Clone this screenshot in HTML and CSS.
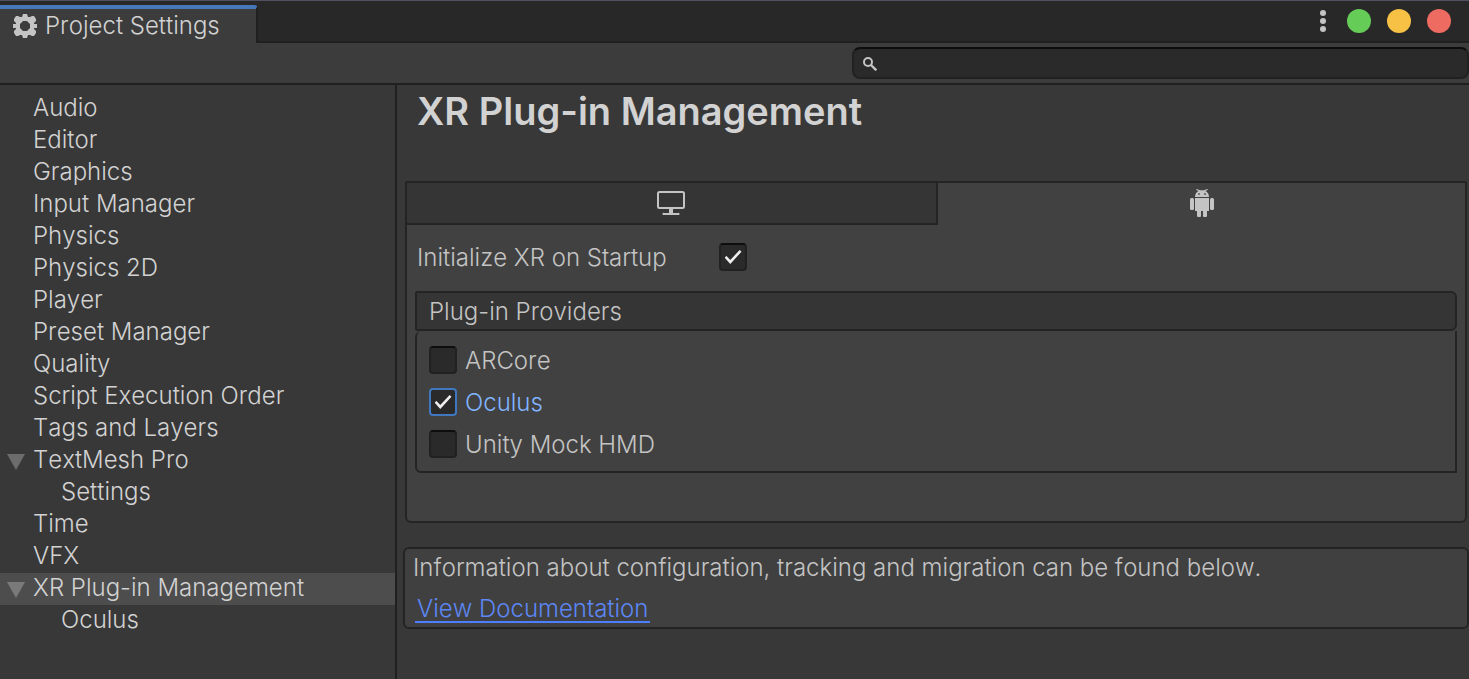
FILE: index.html
```html
<!DOCTYPE html>
<html lang="en">
<head>
<meta charset="utf-8">
<title>Project Settings</title>
<link rel="stylesheet" href="styles.css">
</head>
<body>
<div class="window">
  <header class="titlebar">
    <div class="window-tab">
      <svg class="gear" viewBox="0 0 24 24" aria-hidden="true">
        <path fill="#c4c4c4" fill-rule="evenodd" d="M10 0h4l1 3h2l2-1h2l2 3v2l-2 2v1h3v4h-3v1l2 2v2l-2 3h-2l-2-1h-2l-1 3h-4l-1-3H7l-2 1H3l-2-3v-2l2-2v-1H0v-4h3V9L1 7V5l2-3h2l2 1h2zM10 7l-3 3v4l3 3h4l3-3v-4l-3-3z"/>
      </svg>
      <span>Project Settings</span>
    </div>
    <div class="window-controls">
      <button class="menu" type="button" aria-label="Menu"><i></i><i></i><i></i></button>
      <button class="dot green" type="button" aria-label="Maximize"></button>
      <button class="dot yellow" type="button" aria-label="Minimize"></button>
      <button class="dot red" type="button" aria-label="Close"></button>
    </div>
  </header>
  <div class="toolbar">
    <label class="search">
      <svg class="lens" viewBox="0 0 14 14" aria-hidden="true">
        <circle cx="5" cy="5" r="4" fill="none" stroke="#c4c4c4" stroke-width="2"/>
        <path d="M8 8l5.300 5.300" stroke="#c4c4c4" stroke-width="2.400"/>
      </svg>
      <input type="text" aria-label="Search settings">
    </label>
  </div>
  <div class="content">
    <nav class="sidebar">
      <a class="item" href="#">Audio</a>
      <a class="item" href="#">Editor</a>
      <a class="item" href="#">Graphics</a>
      <a class="item" href="#">Input Manager</a>
      <a class="item" href="#">Physics</a>
      <a class="item" href="#">Physics 2D</a>
      <a class="item" href="#">Player</a>
      <a class="item" href="#">Preset Manager</a>
      <a class="item" href="#">Quality</a>
      <a class="item" href="#">Script Execution Order</a>
      <a class="item" href="#">Tags and Layers</a>
      <a class="item parent" href="#">TextMesh Pro</a>
      <a class="item child" href="#">Settings</a>
      <a class="item" href="#">Time</a>
      <a class="item" href="#">VFX</a>
      <a class="item parent selected" href="#">XR Plug-in Management</a>
      <a class="item child" href="#">Oculus</a>
    </nav>
    <main class="main">
      <h1>XR Plug-in Management</h1>
      <section class="platforms">
        <div class="tabs" role="tablist">
          <button class="tab" type="button" role="tab" aria-label="Desktop" aria-selected="false">
            <svg class="monitor" viewBox="0 0 28 24" aria-hidden="true">
              <rect x="1" y="1" width="26" height="16" rx="1.500" fill="none" stroke="#c4c4c4" stroke-width="2"/>
              <path fill="#c4c4c4" d="M12 18h4v4h5a1 1 0 0 1 1 2H6a1 1 0 0 1 1-2h5z"/>
            </svg>
          </button>
          <button class="tab active" type="button" role="tab" aria-label="Android" aria-selected="true">
            <svg class="android" viewBox="0 0 24 28" aria-hidden="true">
              <g fill="#c4c4c4">
                <path d="M5 8C5 5 6.500 3 8.500 2L6 .7 6.700 0l3.300 1.300h4L17.300 0l.7.7L15.500 2C17.500 3 19 5 19 8z"/>
                <path d="M5 9h14v13H5z"/>
                <rect x="0" y="9" width="4" height="12" rx="1.500"/>
                <rect x="20" y="9" width="4" height="12" rx="1.500"/>
                <path d="M7 21h4v6q0 1-1 1H8q-1 0-1-1zM13 21h4v6q0 1-1 1h-2q-1 0-1-1z"/>
              </g>
              <path fill="#777" d="M8 4h2v2H8zM14 4h2v2h-2z"/>
            </svg>
          </button>
        </div>
        <div class="panel">
          <div class="startup">
            <label for="startup">Initialize XR on Startup</label>
            <input class="check" id="startup" type="checkbox" checked>
          </div>
          <h2>Plug-in Providers</h2>
          <div class="providers">
            <label class="provider"><input class="check" type="checkbox"><span>ARCore</span></label>
            <label class="provider focused"><input class="check" type="checkbox" checked><span>Oculus</span></label>
            <label class="provider"><input class="check" type="checkbox"><span>Unity Mock HMD</span></label>
          </div>
        </div>
      </section>
      <section class="info">
        <p>Information about configuration, tracking and migration can be found below.</p>
        <a href="#">View Documentation</a>
      </section>
    </main>
  </div>
</div>
</body>
</html>
```
FILE: styles.css
```css
* { box-sizing: border-box; }
body {
  margin: 0;
  background: #383838;
  color: #c4c4c4;
  font: 325 24px/32px Inter, "Liberation Sans", sans-serif;
  font-optical-sizing: none;
  font-kerning: none;
}
button { padding: 0; border: 0; background: none; }
svg { display: block; }
.window { display: flex; flex-direction: column; min-height: 100vh; }
.titlebar {
  display: flex;
  justify-content: space-between;
  height: 43px;
  border-top: 1px solid #505060;
  background: linear-gradient(#202020, #202020) bottom / 100% 2px no-repeat #282828;
}
.window-tab {
  display: flex;
  align-items: center;
  gap: 8px;
  margin-top: 4px;
  padding: 0 36px 0 13px;
  border-top: 4px solid #4678b8;
  border-right: 2px solid #202020;
  border-top-right-radius: 4px;
  background: #3c3c3c;
  color: #d2d2d2;
}
.gear { width: 24px; height: 24px; }
.window-controls { display: flex; align-items: center; gap: 16px; padding: 0 18px 2px 0; }
.menu { display: flex; flex-direction: column; align-items: center; gap: 2px; width: 8px; }
.menu i { width: 6px; height: 6px; border-radius: 50%; background: #c4c4c4; }
.dot { width: 24px; height: 24px; border-radius: 50%; }
.green { background: #64cc57; }
.yellow { background: #f6c144; }
.red { background: #ed6b60; }
.menu + .dot { margin-left: 4px; }
.toolbar {
  display: flex;
  justify-content: flex-end;
  padding: 4px 0;
  height: 42px;
  border-bottom: 2px solid #202020;
  background: #3c3c3c;
}
.search {
  display: flex;
  align-items: center;
  gap: 8px;
  width: 42%;
  height: 32px;
  padding: 2px 8px 0 9px;
  border: 2px solid #212121;
  border-top-color: #0d0d0d;
  border-radius: 8px;
  background: #2a2a2a;
}
.lens { width: 14px; height: 14px; }
.search input { flex: 1; min-width: 0; height: 24px; border: 0; outline: 0; background: none; color: inherit; font: inherit; }
.content { display: flex; flex: 1; }
.sidebar { width: 397px; flex-shrink: 0; padding: 8px 0; border-right: 2px solid #202020; }
.item {
  display: flex;
  align-items: center;
  height: 32px;
  padding-left: 33px;
  padding-bottom: 2px;
  color: #d2d2d2;
  text-decoration: none;
}
.child { padding-left: 61px; }
.parent { gap: 8px; padding-left: 7px; }
.parent::before {
  content: "";
  width: 18px;
  height: 16px;
  margin-top: 4px;
  background: #6c6c6c;
  clip-path: polygon(0 0, 100% 0, 50% 100%);
}
.selected { background: #4d4d4d; }
.selected::before { background: #7a7a7a; }
.main { flex: 1; min-width: 0; padding-left: 6px; }
h1 { margin: 0; padding: 2px 14px 46px; color: #d2d2d2; font-size: 38px; font-weight: 600; line-height: 48px; }
.platforms { margin: 0 2px 24px; border: 2px solid #242424; border-radius: 2px 2px 6px 6px; background: #414141; }
.tabs { display: flex; }
.tab { flex: 1; display: flex; justify-content: center; height: 42px; padding-top: 8px; border-bottom: 2px solid #242424; background: #353535; }
.tab:first-child { flex-basis: 4px; padding-right: 2px; border-right: 2px solid #242424; }
.tab.active { padding-top: 6px; border-color: transparent; background: none; }
.monitor { width: 28px; height: 24px; }
.android { width: 24px; height: 28px; }
.panel { padding: 18px 8px 48px; }
.startup { display: flex; align-items: center; height: 28px; margin-bottom: 20px; padding-left: 2px; }
.startup label { width: 302px; padding-top: 2px; }
.check {
  appearance: none;
  display: grid;
  place-items: center;
  width: 28px;
  height: 28px;
  margin: 0;
  border: 2px solid #212121;
  border-top-color: #0d0d0d;
  border-radius: 4px;
  background: #2a2a2a;
}
.check:checked::before {
  content: "";
  width: 17px;
  height: 14px;
  background: #eee;
  clip-path: polygon(0 53%, 12% 43%, 34% 72%, 89% 0, 100% 12%, 34% 100%);
}
h2 {
  margin: 0;
  padding: 3px 12px 1px;
  border: 2px solid #242424;
  border-radius: 2px 6px 6px 2px;
  background: #353535;
  font-size: 24px;
  font-weight: inherit;
}
.providers {
  display: flex;
  flex-direction: column;
  gap: 14px;
  padding: 15px 12px 13px;
  border: 2px solid #242424;
  border-top: 0;
  border-radius: 6px 0 0 6px;
}
.provider { display: flex; align-items: center; gap: 8px; height: 28px; }
.provider span { padding-top: 2px; }
.focused { color: #81b4ff; }
.focused .check { border-color: #4078bf; }
.info { display: flex; flex-direction: column; align-items: flex-start; gap: 12px; padding: 3px 8px 4px; border: 2px solid #242424; border-radius: 6px; background: #404040; }
.info p { margin: 0; }
.info a { margin-left: 2px; padding: 0 2px; border-bottom: 2px solid #4c7eff; color: #5c87f5; line-height: 25px; text-decoration: none; }
```
